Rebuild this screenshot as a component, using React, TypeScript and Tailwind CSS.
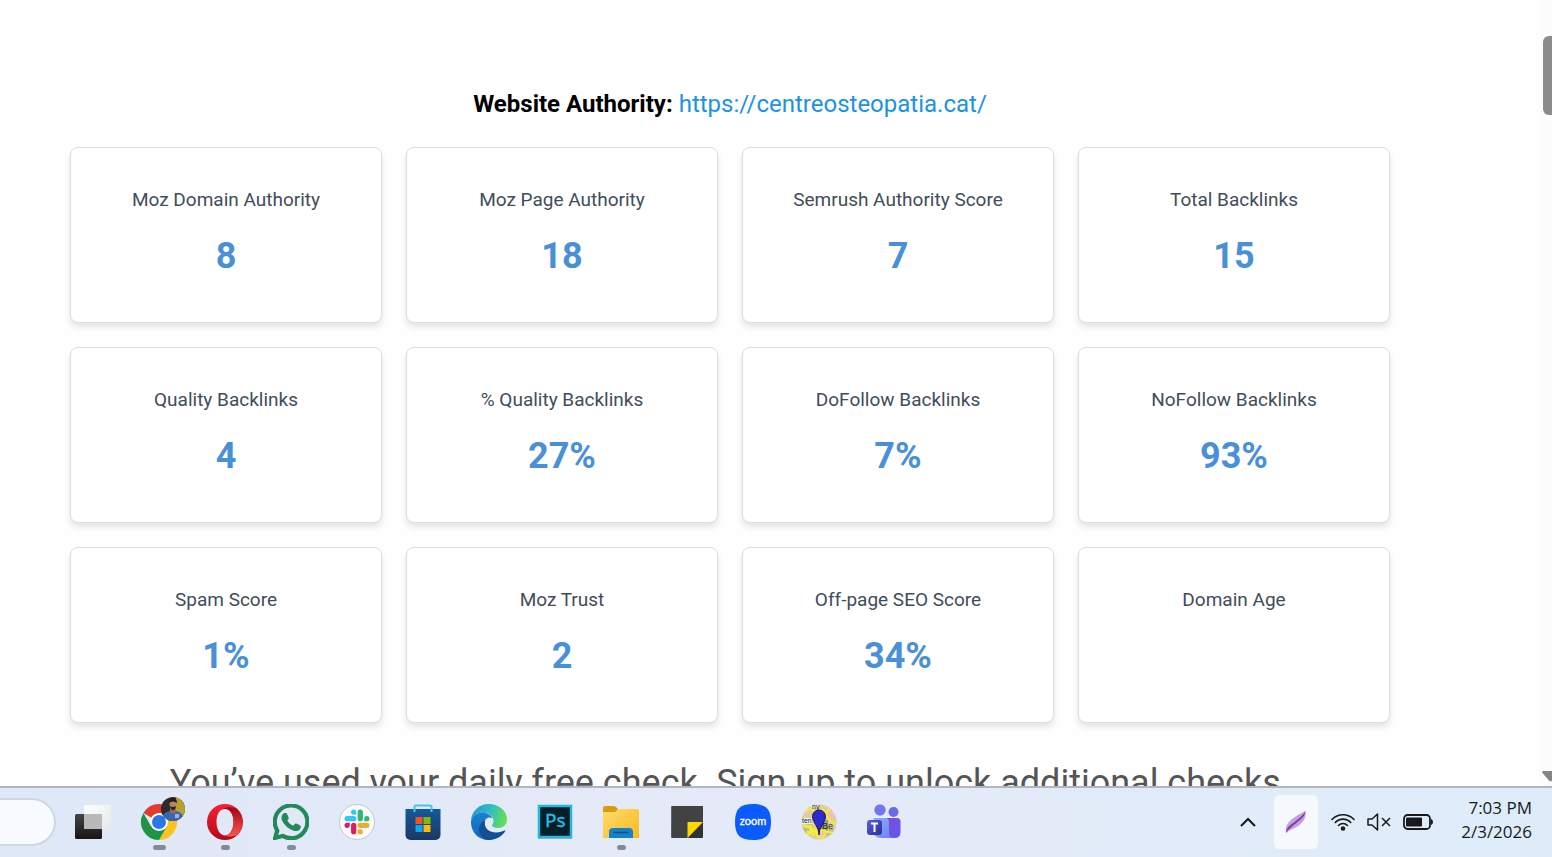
import type { ReactNode } from 'react';

const METRICS = [
    { label: 'Moz Domain Authority', value: '8' },
    { label: 'Moz Page Authority', value: '18' },
    { label: 'Semrush Authority Score', value: '7' },
    { label: 'Total Backlinks', value: '15' },
    { label: 'Quality Backlinks', value: '4' },
    { label: '% Quality Backlinks', value: '27%' },
    { label: 'DoFollow Backlinks', value: '7%' },
    { label: 'NoFollow Backlinks', value: '93%' },
    { label: 'Spam Score', value: '1%' },
    { label: 'Moz Trust', value: '2' },
    { label: 'Off-page SEO Score', value: '34%' },
    { label: 'Domain Age', value: '' },
];

function MetricCard({ label, value }: { label: string; value: string }) {
    return (
        <div className="h-44 rounded-lg border border-[#dcdddf] bg-white pt-9 text-center shadow-[0_4px_6px_rgba(0,0,0,0.1)]">
            <h3 className="text-[19px] leading-8 text-[#414d5a]">{label}</h3>
            <p className="mt-4 text-4xl leading-12 font-bold text-[#4a90d6]">{value}</p>
        </div>
    );
}

/* ---- taskbar icons, each drawn on a 36x36 grid ---- */

const TaskViewIcon = () => (
    <svg viewBox="0 0 36 36" className="size-9">
        <defs>
            <linearGradient id="tvDark" x1="0" y1="0" x2="0" y2="1">
                <stop offset="0" stopColor="#444" />
                <stop offset="1" stopColor="#161616" />
            </linearGradient>
            <linearGradient id="tvLight" x1="0" y1="0" x2="1" y2="1">
                <stop offset="0" stopColor="#fff" />
                <stop offset="1" stopColor="#e6e7e8" />
            </linearGradient>
        </defs>
        <rect x="0" y="10" width="27" height="25" rx="1.5" fill="url(#tvDark)" />
        <rect x="9" y="1" width="27" height="24" rx="1.5" fill="url(#tvLight)" />
        <path d="M9 10h18v15H10.5A1.5 1.5 0 0 1 9 23.500z" fill="#b9b9b9" />
    </svg>
);

const ChromeIcon = () => (
    <svg viewBox="0 0 52 52" className="size-[52px] shrink-0">
        <defs>
            <clipPath id="avatarClip">
                <circle cx="40" cy="13" r="12" />
            </clipPath>
        </defs>
        <g transform="translate(3 3)">
            <path d="M23 23 7.400 14A18 18 0 0 1 38.600 14H23z" fill="#e33b2e" />
            <path d="M38.600 14A18 18 0 0 1 23 41l7.800-13.500L23 14z" fill="#fcc31e" />
            <path d="M7.400 14A18 18 0 0 0 23 41l7.800-13.500L23 23l-7.800 4.500z" fill="#1f9447" />
            <circle cx="23" cy="23" r="9" fill="#fff" />
            <circle cx="23" cy="23" r="7" fill="#2b77e8" />
        </g>
        <g clipPath="url(#avatarClip)">
            <path d="M27 0h26v26H27z" fill="#2e2b2a" />
            <path d="M43 0h10v26H42z" fill="#b7a12e" />
            <path d="M29 21q2-5 8-6h6q6 1 7 6v5H29z" fill="#3c64b4" />
            <path d="M37 11h6v5q-3 3-6 0z" fill="#9a6b50" />
            <ellipse cx="40" cy="8" rx="3.500" ry="4.500" fill="#b58468" />
            <path d="M36 7q0-5 4-5t4 5q-4-3-8 0zM37 10q3 2 6 0-1 4-3 4t-3-4z" fill="#2b1d19" />
            <path d="M42 18h4v4h-4z" fill="#9db4dc" />
        </g>
    </svg>
);

const OperaIcon = () => (
    <svg viewBox="0 0 36 36" className="size-9">
        <defs>
            <linearGradient id="operaRing" x1="0" y1="0" x2="0" y2="1">
                <stop offset="0" stopColor="#fb2136" />
                <stop offset="1" stopColor="#b4071b" />
            </linearGradient>
            <linearGradient id="operaSide" x1="0" y1="0" x2="0" y2="1">
                <stop offset="0" stopColor="#a20515" />
                <stop offset="1" stopColor="#f9584f" />
            </linearGradient>
        </defs>
        <path fillRule="evenodd" d="M18 0a18 18 0 1 0 0 36 18 18 0 0 0 0-36zm0 4.500c4.700 0 8.500 6 8.500 13.500s-3.800 13.500-8.500 13.500S9.500 26 9.500 18 13.300 4.500 18 4.500z" fill="url(#operaRing)" />
        <path d="M12 7.500C17 2 25 2.500 30 5a18 18 0 0 1 0 26c-5 2.500-13 2-18-2.500 2 3 9 4.500 12.500-1.500 2.700-5 2.700-13 0-18-3.500-6-10-4.500-12.500-1.500z" fill="url(#operaSide)" />
    </svg>
);

const WhatsAppIcon = () => (
    <svg viewBox="0 0 24 24" className="size-9" fill="#21895a">
        <path d="M17.472 14.382c-.297-.149-1.758-.867-2.030-.967-.273-.099-.471-.148-.670.150-.197.297-.767.966-.940 1.164-.173.199-.347.223-.644.075-.297-.150-1.255-.463-2.390-1.475-.883-.788-1.480-1.761-1.653-2.059-.173-.297-.018-.458.130-.606.134-.133.298-.347.446-.520.149-.174.198-.298.298-.497.099-.198.050-.371-.025-.520-.075-.149-.669-1.612-.916-2.207-.242-.579-.487-.500-.669-.510-.173-.008-.371-.010-.570-.010-.198 0-.520.074-.792.372-.272.297-1.040 1.016-1.040 2.479 0 1.462 1.065 2.875 1.213 3.074.149.198 2.096 3.200 5.077 4.487.709.306 1.262.489 1.694.625.712.227 1.360.195 1.871.118.571-.085 1.758-.719 2.006-1.413.248-.694.248-1.289.173-1.413-.074-.124-.272-.198-.570-.347m-5.421 7.403h-.004a9.870 9.870 0 0 1-5.031-1.378l-.361-.214-3.741.982.998-3.648-.235-.374a9.860 9.860 0 0 1-1.510-5.260c.001-5.450 4.436-9.884 9.888-9.884 2.640 0 5.122 1.030 6.988 2.898a9.825 9.825 0 0 1 2.893 6.994c-.003 5.450-4.437 9.884-9.885 9.884m8.413-18.297A11.815 11.815 0 0 0 12.050 0C5.495 0 .160 5.335.157 11.892c0 2.096.547 4.142 1.588 5.945L.057 24l6.305-1.654a11.882 11.882 0 0 0 5.683 1.448h.005c6.554 0 11.890-5.335 11.893-11.893a11.821 11.821 0 0 0-3.480-8.413z" stroke="#21895a" strokeWidth=".8" />
    </svg>
);

const SlackIcon = () => (
    <svg viewBox="0 0 36 36" className="size-9">
        <circle cx="18" cy="18" r="17.500" fill="#fbfbfb" stroke="#c5c6ce" />
        <g transform="translate(5.500 5.500) scale(1.04)">
            <path d="M5.042 15.165a2.528 2.528 0 0 1-2.520 2.523A2.528 2.528 0 0 1 0 15.165a2.527 2.527 0 0 1 2.522-2.520h2.520v2.520zm1.271 0a2.527 2.527 0 0 1 2.521-2.520 2.527 2.527 0 0 1 2.521 2.520v6.313A2.528 2.528 0 0 1 8.834 24a2.528 2.528 0 0 1-2.521-2.522v-6.313z" fill="#dc1e5c" />
            <path d="M8.834 5.042a2.528 2.528 0 0 1-2.521-2.520A2.528 2.528 0 0 1 8.834 0a2.528 2.528 0 0 1 2.521 2.522v2.520H8.834zm0 1.271a2.528 2.528 0 0 1 2.521 2.521 2.528 2.528 0 0 1-2.521 2.521H2.522A2.528 2.528 0 0 1 0 8.834a2.528 2.528 0 0 1 2.522-2.521h6.312z" fill="#36c5f0" />
            <path d="M18.956 8.834a2.528 2.528 0 0 1 2.522-2.521A2.528 2.528 0 0 1 24 8.834a2.528 2.528 0 0 1-2.522 2.521h-2.522V8.834zm-1.268 0a2.528 2.528 0 0 1-2.523 2.521 2.527 2.527 0 0 1-2.520-2.521V2.522A2.527 2.527 0 0 1 15.165 0a2.528 2.528 0 0 1 2.523 2.522v6.312z" fill="#2eb67d" />
            <path d="M15.165 18.956a2.528 2.528 0 0 1 2.523 2.522A2.528 2.528 0 0 1 15.165 24a2.527 2.527 0 0 1-2.520-2.522v-2.522h2.520zm0-1.268a2.527 2.527 0 0 1-2.520-2.523 2.526 2.526 0 0 1 2.520-2.520h6.313A2.527 2.527 0 0 1 24 15.165a2.528 2.528 0 0 1-2.522 2.523h-6.313z" fill="#e5ae31" />
        </g>
    </svg>
);

const StoreIcon = () => (
    <svg viewBox="0 0 36 36" className="size-9">
        <defs>
            <linearGradient id="storeBag" x1="0" y1="0" x2="0" y2="1">
                <stop offset="0" stopColor="#15599a" />
                <stop offset="1" stopColor="#1d3764" />
            </linearGradient>
        </defs>
        <path d="M.5 5h35v26a5 5 0 0 1-5 5h-25a5 5 0 0 1-5-5z" fill="url(#storeBag)" />
        <path d="M9.500 8V3q0-1.500 1.500-1.500h14q1.500 0 1.500 1.500v5" fill="none" stroke="#46c4ee" strokeWidth="2" />
        <path d="M10.500 13H17.500v7h-7z" fill="#f25325" />
        <path d="M18.500 13h7v7h-7z" fill="#80bb0b" />
        <path d="M10.500 21h7v7h-7z" fill="#08a6ef" />
        <path d="M18.500 21h7v7h-7z" fill="#ffb90a" />
    </svg>
);

const EdgeIcon = () => (
    <svg viewBox="0 0 36 36" className="size-9">
        <defs>
            <linearGradient id="edgeTop" x1="0" y1=".3" x2="1" y2=".5">
                <stop offset="0" stopColor="#2796d5" />
                <stop offset=".5" stopColor="#2fbdc2" />
                <stop offset="1" stopColor="#66df55" />
            </linearGradient>
            <linearGradient id="edgeMid" x1="0" y1="0" x2="0" y2="1">
                <stop offset="0" stopColor="#1c7fd0" />
                <stop offset="1" stopColor="#1068bd" />
            </linearGradient>
        </defs>
        <path d="M0 18C0 7 8 0 18 0s18 7 18 15c0 6-4 9-8.500 9-4 0-6.500-1.500-6.500-2.500s1.500-1.500 1.500-4.500c0-5-5-8.500-11-8.500C5 8.500 1 13 0 18z" fill="url(#edgeTop)" />
        <path d="M0 18C1 12 6 8.500 11 8.500c5 0 9 2.500 10.500 6C17 12 13.500 15 13.500 20c0 7 5 12 12 13-3 2-5 3-8 3C7 36 0 28 0 18z" fill="url(#edgeMid)" />
        <path d="M14 16.500C12.500 25 19 28.500 25 28.500c4 0 7-1.500 8.500-2 .8-.2 1 .4.600 1C31 32 25 36 18 36 11 35 8 30 8 25c0-4 3-7.500 6-8.500z" fill="#124e93" />
    </svg>
);

const PhotoshopIcon = () => (
    <svg viewBox="0 0 36 36" className="size-9">
        <rect x="1" y="2" width="34" height="33" fill="#9db4c2" />
        <rect x="2" y="2" width="32" height="31" fill="#051f29" stroke="#21b8df" strokeWidth="2.500" />
        <text x="8" y="23" fontFamily="Open Sans, sans-serif" fontSize="19" fill="#25c2ee" stroke="#25c2ee" strokeWidth=".4">Ps</text>
    </svg>
);

const FolderIcon = () => (
    <svg viewBox="0 0 36 36" className="size-9">
        <defs>
            <linearGradient id="folderFront" x1="0" y1="0" x2="1" y2="1">
                <stop offset="0" stopColor="#ffdc6e" />
                <stop offset="1" stopColor="#f8b91e" />
            </linearGradient>
        </defs>
        <path d="M0 4q0-2 2-2h9q1.500 0 2.500 1.500L15 5v6H0z" fill="#d99b12" />
        <path d="M0 8h11q1.500 0 2.500-1.500T16 5h18q2 0 2 2v27H0z" fill="url(#folderFront)" />
        <path d="M6 34v-6q0-4 4-4h16q4 0 4 4v6z" fill="#1382c9" />
        <path d="M11 28.500h14" stroke="#0b4f88" strokeWidth="1.500" strokeLinecap="round" />
    </svg>
);

const StickyNotesIcon = () => (
    <svg viewBox="0 0 36 36" className="size-9">
        <path d="M3 2h31v16.500L18.500 34H3q-.8 0-.8-.8V2.800Q2.200 2 3 2z" fill="#414243" />
        <path d="M34 18v15q0 1-1 1H18.500z" fill="#323334" />
        <path d="M18.500 18H34L18.500 34z" fill="#fbd900" />
    </svg>
);

const ZoomIcon = () => (
    <svg viewBox="0 0 36 36" className="size-9">
        <path d="M18 0c13 0 18 5 18 18s-5 18-18 18S0 31 0 18 5 0 18 0z" fill="#0b5cff" />
        <text x="18" y="21" textAnchor="middle" fontFamily="Lato, sans-serif" fontSize="11" fill="#fff" stroke="#fff" strokeWidth=".3">zoom</text>
    </svg>
);

const MapIcon = () => (
    <svg viewBox="0 0 36 36" className="size-9">
        <defs>
            <clipPath id="mapClip">
                <circle cx="18" cy="18" r="17.500" />
            </clipPath>
        </defs>
        <g clipPath="url(#mapClip)">
            <path d="M0 0h36v36H0z" fill="#d9d09a" />
            <path d="M22 5l8-1 4 9-7 4zM3 7l8-3 3 5-9 3zM13 29l9-2 3 5-8 4z" fill="#ecc3b4" />
            <path d="M1 24l9-5 3 5-8 5zM24 26l9-2-2 6-7 2z" fill="#b9bd93" />
            <path d="M10 0h8v4h-8zM0 14h11v6H0z" fill="#eef0f4" />
            <path d="M17 16h10v12h-7z" fill="#9c9c80" />
            <path d="M2 9l7-4 4 2M2 21l12 5 5 10M21 4l8 13 6 3M4 31l12-6 16 4M11 22l-4 10M26 27l-5 8M29 4l-5 7M6 27l8 5M3 23l8-1M12 29l12-3" fill="none" stroke="#f5ee35" strokeWidth="2" />
        </g>
        <g fontFamily="Liberation Sans, sans-serif" fill="#222">
            <text x="11" y="5" fontSize="7">ny</text>
            <text x="1" y="19" fontSize="7">ten</text>
            <text x="21" y="25" fontSize="9">Be</text>
        </g>
        <path d="M18 31c0-8-6.500-13-6.500-18.500a6.500 6.500 0 0 1 13 0C24.500 18 18 23 18 31z" fill="#2d2bd0" stroke="#17154f" />
    </svg>
);

const TeamsIcon = () => (
    <svg viewBox="0 0 36 36" className="size-9">
        <defs>
            <linearGradient id="teamsBack" x1="0" y1="0" x2="1" y2="1">
                <stop offset="0" stopColor="#7b4fd6" />
                <stop offset="1" stopColor="#6259ee" />
            </linearGradient>
            <linearGradient id="teamsFront" x1="0" y1="0" x2="1" y2="1">
                <stop offset="0" stopColor="#86b5fb" />
                <stop offset="1" stopColor="#6c7df5" />
            </linearGradient>
            <linearGradient id="teamsTile" x1="0" y1="0" x2="1" y2="1">
                <stop offset="0" stopColor="#5a5be0" />
                <stop offset="1" stopColor="#2c3296" />
            </linearGradient>
        </defs>
        <circle cx="13" cy="6" r="5.700" fill="#7178ee" />
        <circle cx="26.500" cy="8" r="5" fill="#696be6" />
        <path d="M20 14h10q3.500 0 3.500 3.500V28q0 6-6 6H18z" fill="url(#teamsBack)" />
        <path d="M6.500 14H18q4 0 4 4v10q0 6 5 6H14q-7.500 0-7.500-7z" fill="url(#teamsFront)" />
        <rect x="0" y="16" width="15" height="15" rx="3" fill="url(#teamsTile)" />
        <path d="M4 19.500h7M7.500 19.500v8.500" stroke="#fff" strokeWidth="2" />
    </svg>
);

const APPS: { name: string; icon: ReactNode; running?: boolean; wide?: boolean }[] = [
    { name: 'Task View', icon: <TaskViewIcon /> },
    { name: 'Google Chrome', icon: <ChromeIcon />, running: true, wide: true },
    { name: 'Opera', icon: <OperaIcon />, running: true },
    { name: 'WhatsApp', icon: <WhatsAppIcon />, running: true },
    { name: 'Slack', icon: <SlackIcon /> },
    { name: 'Microsoft Store', icon: <StoreIcon /> },
    { name: 'Microsoft Edge', icon: <EdgeIcon /> },
    { name: 'Photoshop', icon: <PhotoshopIcon /> },
    { name: 'File Explorer', icon: <FolderIcon />, running: true },
    { name: 'Sticky Notes', icon: <StickyNotesIcon /> },
    { name: 'Zoom', icon: <ZoomIcon /> },
    { name: 'Maps', icon: <MapIcon /> },
    { name: 'Microsoft Teams', icon: <TeamsIcon /> },
];

function Tray() {
    return (
        <div className="ml-auto flex items-center pr-5 text-[#17191c]">
            <button aria-label="Show hidden icons" className="mr-4">
                <svg viewBox="0 0 18 18" className="size-[18px]" fill="none" stroke="currentColor" strokeWidth="2">
                    <path d="M2 13l7-7 7 7" />
                </svg>
            </button>
            <button aria-label="Pen menu" className="flex h-14 w-[46px] items-center justify-center rounded-md border border-[#e6ebf2] bg-[#f5f8fc]">
                <svg viewBox="0 0 24 24" className="size-6">
                    <path d="M2 23C1 15 5 11 11 7c4-3 7-4 10.500-6 1 6-1.500 10-6 14-5 4-9 4-13.500 8z" fill="#c49fe0" />
                    <path d="M2 23C2 17 8 14 13 10c4-3 7-6 8.500-9-.5 5-4 8-8 11-5 4-8 6-11.500 11z" fill="#7e38ae" />
                </svg>
            </button>
            <button aria-label="Network, volume and battery" className="ml-3 flex items-center gap-3">
                <svg viewBox="0 0 24 20" className="h-5 w-6" fill="none" stroke="currentColor" strokeWidth="1.600" strokeLinecap="round">
                    <path d="M1 7.500a15 15 0 0 1 22 0M4.300 10.500a10.500 10.500 0 0 1 15.400 0M7.500 13.500a6.200 6.200 0 0 1 9 0" />
                    <circle cx="12" cy="16.500" r="1.500" fill="currentColor" />
                </svg>
                <svg viewBox="0 0 24 20" className="h-5 w-6" fill="none" stroke="currentColor" strokeWidth="1.500" strokeLinejoin="round">
                    <path d="M1 7h4l5.500-5v16L5 13H1z" />
                    <path d="M15 6l8 8M23 6l-8 8" />
                </svg>
                <svg viewBox="0 0 30 16" className="h-4 w-[30px]">
                    <rect x="1" y="1" width="26" height="14" rx="3.500" fill="none" stroke="currentColor" strokeWidth="1.800" />
                    <rect x="3" y="3.500" width="16" height="9" rx="1" fill="currentColor" />
                    <path d="M28 5q2 .5 2 3t-2 3z" fill="currentColor" />
                </svg>
            </button>
            <button className="ml-7 pb-1 text-right font-['Open_Sans',sans-serif] text-[17px] leading-6">
                <span className="block">7:03 PM</span>
                <span className="block">2/3/2026</span>
            </button>
        </div>
    );
}

export default function App() {
    return (
        <div className="flex h-screen flex-col overflow-hidden bg-[#fefefe] font-[Roboto,sans-serif]">
            <div className="flex min-h-0 flex-1">
                <main className="min-w-0 flex-1 overflow-hidden pt-[88px] pr-[149px] pl-[70px]">
                    <h2 className="text-center text-2xl leading-8 font-bold text-black">
                        Website Authority:{' '}
                        <a href="https://centreosteopatia.cat/" className="font-normal text-[#1c92e3]">https://centreosteopatia.cat/</a>
                    </h2>
                    <section className="mt-[27px] grid grid-cols-4 gap-6">
                        {METRICS.map((m) => (
                            <MetricCard key={m.label} label={m.label} value={m.value} />
                        ))}
                    </section>
                    <p className="mt-9 text-center text-4xl leading-12 whitespace-nowrap text-[#555]">
                        You’ve used your daily free check. Sign up to unlock additional checks.
                    </p>
                </main>

                {/* page scrollbar */}
                <div className="flex w-[13px] flex-col items-end justify-between overflow-hidden bg-[#fcfcfc] pt-9 pb-1">
                    <div className="h-[79px] w-[9px] rounded-l-md bg-[#8b8b8b]" />
                    <svg viewBox="0 0 10 12" className="h-3 w-[10px]" fill="#858585">
                        <path d="M1 1h9v10q-2 1-3.500-1L.5 3Q-.3 1.300 1 1z" />
                    </svg>
                </div>
            </div>

            <footer className="flex h-[71px] shrink-0 items-center border-t-2 border-[#b1b7c0] bg-linear-to-r from-[#dfe8f7] via-[#e5eaf8] to-[#deecf9] pb-[2px]">
                <div className="h-12 w-14 rounded-r-full border-2 border-l-0 border-[#cdd7e3] bg-[#f8fbff]" />
                <nav className="ml-[13px] flex gap-[18px]">
                    {APPS.map((app) => (
                        <button key={app.name} aria-label={app.name} className="relative flex size-12 items-center justify-center">
                            {app.icon}
                            {app.running && (
                                <span className={`absolute -bottom-1 h-[5px] rounded-full bg-[#858b96] ${app.wide ? 'w-[13px]' : 'w-[9px]'}`} />
                            )}
                        </button>
                    ))}
                </nav>
                <Tray />
            </footer>
        </div>
    );
}
